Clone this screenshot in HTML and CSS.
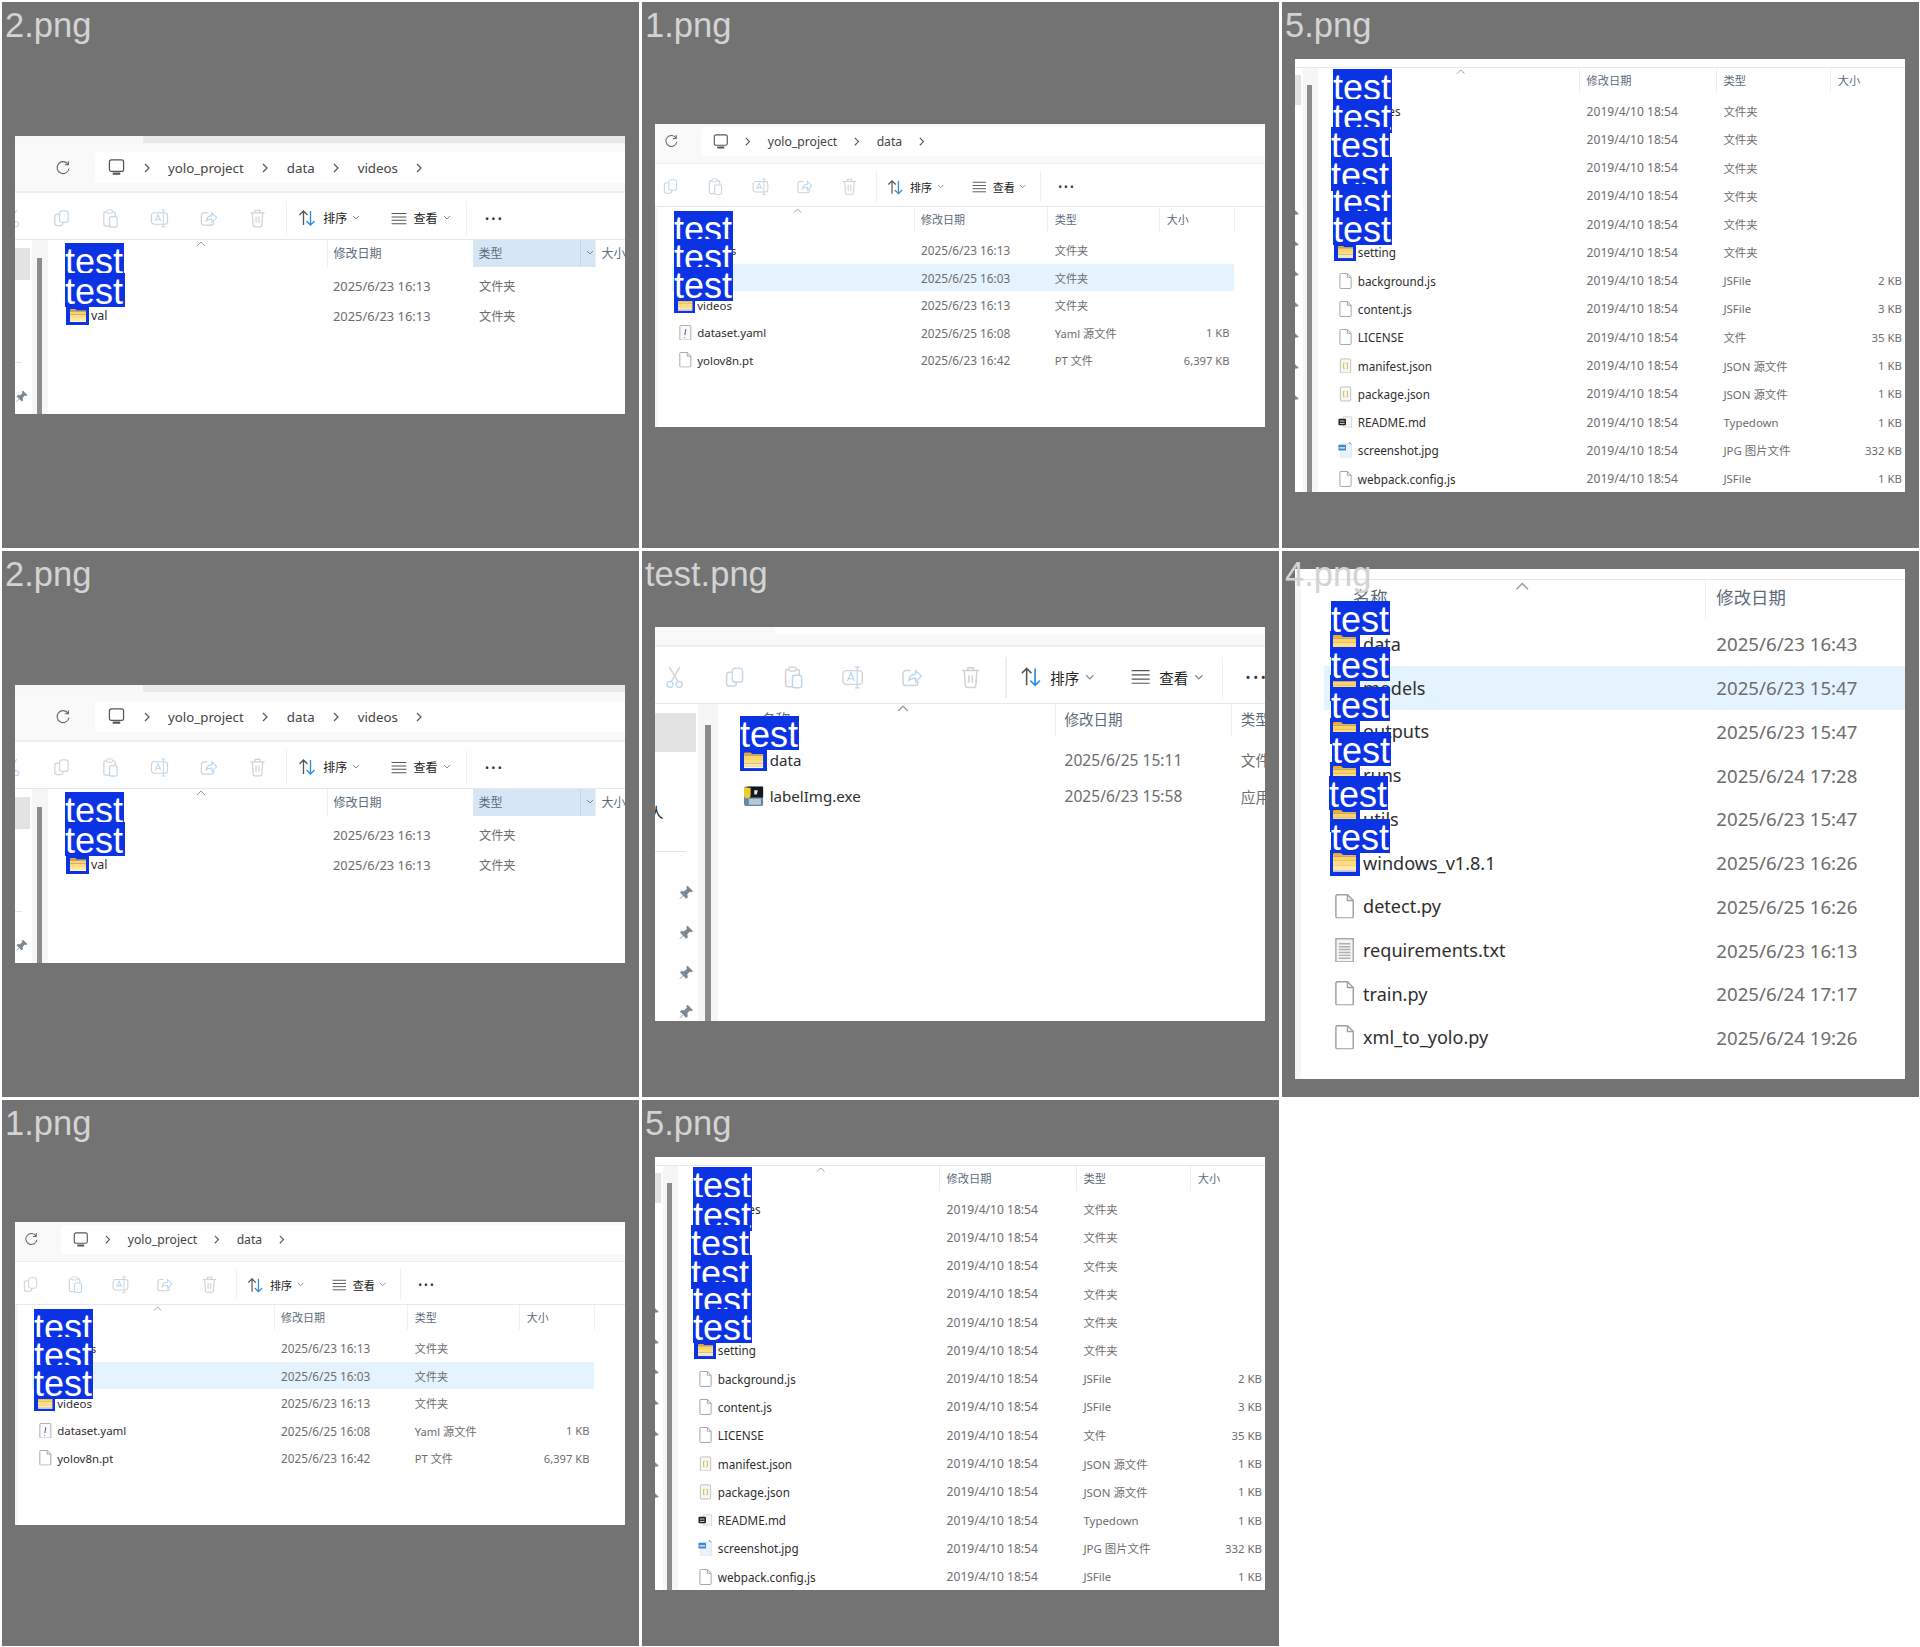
FILE: index.html
```html
<!DOCTYPE html>
<html lang="en">
<head>
    <meta charset="UTF-8">
    <title>Folder screenshots</title>
    <link rel="stylesheet" href="styles.css">
</head>
<body>
    <svg class="defs" width="0" height="0">
        <symbol id="refresh" viewBox="0 0 16 16"><path d="M13 4.2A6 6 0 1 0 14 8.5M13.4 1.2v3.6H9.8" fill="none" stroke="#666" stroke-width="1.1"/></symbol>
        <symbol id="pc" viewBox="0 0 18 18"><rect x="1.5" y="1" width="15" height="12" rx="2" fill="none" stroke="#555" stroke-width="1.3"/><path d="M5 15.5h8" stroke="#555" stroke-width="2.4"/></symbol>
        <symbol id="chev" viewBox="0 0 8 10"><path d="M2 1l4 4-4 4" fill="none" stroke="#555" stroke-width="1.2"/></symbol>
        <symbol id="cut" viewBox="0 0 18 20"><circle cx="5" cy="16" r="2.6" fill="none" stroke="#bcd8f0" stroke-width="1.2"/><circle cx="13" cy="16" r="2.6" fill="none" stroke="#bcd8f0" stroke-width="1.2"/><path d="M6 13.6L13.5 1M12 13.6L4.5 1" fill="none" stroke="#d2d2d2" stroke-width="1.2"/></symbol>
        <symbol id="copy" viewBox="0 0 18 20"><rect x="7" y="2" width="9" height="12" rx="2.5" fill="none" stroke="#c4dbef" stroke-width="1.3"/><path d="M7 5.5H4.5A2.5 2.5 0 0 0 2 8v7a2.500 2.500 0 0 0 2.500 2.500H8A2.500 2.500 0 0 0 10.500 15v-1" fill="none" stroke="#d2d2d2" stroke-width="1.3"/></symbol>
        <symbol id="paste" viewBox="0 0 18 20"><rect x="2" y="3" width="12" height="15" rx="2" fill="none" stroke="#d2d2d2" stroke-width="1.3"/><rect x="5" y="1" width="6" height="3.500" rx="1" fill="#fff" stroke="#d2d2d2"/><rect x="8" y="8" width="8" height="11" rx="2" fill="#fff" stroke="#bcd8f0" stroke-width="1.3"/></symbol>
        <symbol id="rename" viewBox="0 0 20 20"><rect x="1.500" y="4" width="17" height="12" rx="3" fill="none" stroke="#d2d2d2" stroke-width="1.2"/><path d="M5.500 13l3-7 3 7M6.500 11h4" fill="none" stroke="#bcd8f0" stroke-width="1.2"/><path d="M14 1v18M12 1h4M12 19h4" stroke="#bcd8f0" stroke-width="1.100"/></symbol>
        <symbol id="share" viewBox="0 0 18 20"><path d="M8 4H4a2.500 2.500 0 0 0-2.500 2.500v8A2.500 2.500 0 0 0 4 17h8a2.500 2.500 0 0 0 2.500-2.500V13" fill="none" stroke="#d2d2d2" stroke-width="1.300"/><path d="M6.500 12.500C7 9 9.500 7.200 12.500 7.200V4l5 5-5 5v-3.300c-2.500 0-4.500.4-6 1.800z" fill="#fff" stroke="#bcd8f0" stroke-width="1.200"/></symbol>
        <symbol id="trash" viewBox="0 0 18 20"><path d="M1.500 4h15M6.500 3.500V1.500h5v2M3.500 4l1 13.500a1.500 1.500 0 0 0 1.500 1.200h6a1.500 1.500 0 0 0 1.500-1.200l1-13.500M7.500 8v6.500M10.500 8v6.500" fill="none" stroke="#d2d2d2" stroke-width="1.300"/></symbol>
        <symbol id="sort" viewBox="0 0 18 18"><path d="M5.500 16V2M1.500 6l4-4 4 4" fill="none" stroke="#555" stroke-width="1.300"/><path d="M12.500 2v14M8.500 12l4 4 4-4" fill="none" stroke="#2f8fd8" stroke-width="1.400"/></symbol>
        <symbol id="view" viewBox="0 0 16 14"><path d="M0 1.500h16M0 5.300h16M0 9h16M0 12.700h16" stroke="#555" stroke-width="1.100"/></symbol>
        <symbol id="caret" viewBox="0 0 8 6"><path d="M1 1l3 3 3-3" fill="none" stroke="#888" stroke-width="1"/></symbol>
        <symbol id="up" viewBox="0 0 10 6"><path d="M1 5l4-4 4 4" fill="none" stroke="#9a9a9a" stroke-width="1"/></symbol>
        <symbol id="pin" viewBox="0 0 14 14"><path d="M8.500 1l4.500 4.500-1.300.6-1.700-.3L8 8.500l.3 2.500-1 1L2 6.700l1-1 2.500.3 2.700-2.500-.3-1.700zM4.300 9.700L1.500 12.500" fill="#7d8792" stroke="#7d8792" stroke-width=".7"/></symbol>
        <symbol id="folder" viewBox="0 0 16 13"><path d="M0 1a1 1 0 0 1 1-1h4.500l1.500 1.500H0z" fill="#eeaa22"/><rect y="1.500" width="16" height="1" fill="#f5c24a"/><rect y="2.500" width="16" height="3" fill="#ffd35f"/><rect y="5.500" width="16" height="3.500" fill="#ffdd80"/><rect y="9" width="16" height="3" fill="#fee8a8"/><rect y="12" width="16" height="1" fill="#fff8e2"/></symbol>
        <symbol id="file" viewBox="0 0 13 17"><path d="M.5 1.500a1 1 0 0 1 1-1H8.500l4 4v11a1 1 0 0 1-1 1h-10a1 1 0 0 1-1-1z" fill="#fff" stroke="#a0a0a0"/><path d="M8.500.5v4h4" fill="none" stroke="#a0a0a0"/></symbol>
        <symbol id="yaml" viewBox="0 0 13 17"><rect x=".5" y=".5" width="12" height="16" rx="1" fill="#fafafa" stroke="#a8a8a8"/><path d="M7 4.500L6 11M5.600 13.200v.8" stroke="#5a6f9c" stroke-width="1.200"/></symbol>
        <symbol id="json" viewBox="0 0 13 17"><rect x="1" y="1" width="11" height="15" rx="1" fill="#f8f8f0" stroke="#bdbdbd"/><path d="M5.500 5.500H4.500v6h1M7.500 5.500h1v6h-1" fill="none" stroke="#c2bb55"/></symbol>
        <symbol id="md" viewBox="0 0 13 17"><path d="M4 3h9v11H4z" fill="#f6f6f6" stroke="#d8d8d8"/><rect x="-1" y="5" width="8" height="7" rx="1" fill="#222"/><rect x=".5" y="7" width="5" height="1" fill="#ddd"/><rect x=".5" y="9.500" width="5" height="1" fill="#ddd"/></symbol>
        <symbol id="jpg" viewBox="0 0 13 17"><rect x="1" y="2" width="12" height="15" fill="#eaf2fa" stroke="#e2e9f0"/><rect x="-1" y="3" width="8" height="6" fill="#3f86d2"/><rect x="0" y="5.500" width="6" height="1.500" fill="#dce9f6"/><path d="M10 0l2.500 2.500" stroke="#3f86d2"/></symbol>
        <symbol id="txt" viewBox="0 0 13 17"><rect x=".5" y=".5" width="12" height="16" fill="#f4f4f4" stroke="#a8a8a8"/><path d="M2.500 4h8M2.500 6h8M2.500 8h8M2.500 10h8M2.500 12h8M2.500 14h8" stroke="#b0b0b0"/></symbol>
        <symbol id="exe" viewBox="0 0 16 16"><rect width="16" height="16" rx="1.500" fill="#5f89ad"/><rect x="3" width="13" height="9" fill="#17181c"/><path d="M0 1h5.500v6A2.700 2.700 0 0 1 0 7z" fill="#f2c92f"/><path d="M8.500 3h3l-1 3.500H8.500z" fill="#e8e8e8"/><rect x="4" y="10" width="10" height="5" fill="#b9c6d2"/></symbol>
    </svg>

    <div class="sheet">

        <div class="tile shot-videos">
            <div class="panel">
                <div class="win">
                    <div class="tabs"></div>
                    <div class="addr">
                        <svg class="refresh"><use href="#refresh"/></svg>
                        <div class="crumbs">
                            <svg class="pc"><use href="#pc"/></svg>
                            <svg class="chev"><use href="#chev"/></svg><span>yolo_project</span>
                            <svg class="chev"><use href="#chev"/></svg><span>data</span>
                            <svg class="chev"><use href="#chev"/></svg><span>videos</span>
                            <svg class="chev"><use href="#chev"/></svg>
                        </div>
                    </div>
                    <div class="tools">
                        <svg class="tool"><use href="#cut"/></svg>
                        <svg class="tool"><use href="#copy"/></svg>
                        <svg class="tool"><use href="#paste"/></svg>
                        <svg class="tool"><use href="#rename"/></svg>
                        <svg class="tool"><use href="#share"/></svg>
                        <svg class="tool"><use href="#trash"/></svg>
                        <i class="tool-sep"></i>
                        <svg class="sort"><use href="#sort"/></svg><span class="tool-text">排序</span><svg class="caret"><use href="#caret"/></svg>
                        <svg class="view"><use href="#view"/></svg><span class="tool-text">查看</span><svg class="caret"><use href="#caret"/></svg>
                        <i class="tool-sep sep-b"></i>
                        <span class="dots">•••</span>
                    </div>
                    <div class="body">
                        <div class="side">
                            <div class="side-sel"></div>
                            <div class="side-who">人</div>
                            <div class="side-line"></div>
                            <svg class="pin"><use href="#pin"/></svg>
                            <svg class="pin"><use href="#pin"/></svg>
                        </div>
                        <div class="list">
                            <div class="head">
                                <div class="hd hd-name"><svg class="up"><use href="#up"/></svg>名称</div>
                                <div class="hd">修改日期</div>
                                <div class="hd hd-on">类型<svg class="caret"><use href="#caret"/></svg></div>
                                <div class="hd">大小</div>
                            </div>
                            <div class="row"><div class="name dir"><svg class="ico"><use href="#folder"/></svg><span>train</span></div><span class="date">2025/6/23 16:13</span><span>文件夹</span><span class="size"></span></div>
                            <div class="row"><div class="name dir"><svg class="ico"><use href="#folder"/></svg><span>val</span></div><span class="date">2025/6/23 16:13</span><span>文件夹</span><span class="size"></span></div>
                        </div>
                    </div>
                </div>
                <div class="masks"><span class="mask">test</span><span class="mask">test</span></div>
            </div>
            <span class="tile-name">2.png</span>
        </div>

        <div class="tile shot-data">
            <div class="panel">
                <div class="win">
                    <div class="tabs"></div>
                    <div class="addr">
                        <svg class="refresh"><use href="#refresh"/></svg>
                        <div class="crumbs">
                            <svg class="pc"><use href="#pc"/></svg>
                            <svg class="chev"><use href="#chev"/></svg><span>yolo_project</span>
                            <svg class="chev"><use href="#chev"/></svg><span>data</span>
                            <svg class="chev"><use href="#chev"/></svg>
                        </div>
                    </div>
                    <div class="tools">
                        <svg class="tool"><use href="#cut"/></svg>
                        <svg class="tool"><use href="#copy"/></svg>
                        <svg class="tool"><use href="#paste"/></svg>
                        <svg class="tool"><use href="#rename"/></svg>
                        <svg class="tool"><use href="#share"/></svg>
                        <svg class="tool"><use href="#trash"/></svg>
                        <i class="tool-sep"></i>
                        <svg class="sort"><use href="#sort"/></svg><span class="tool-text">排序</span><svg class="caret"><use href="#caret"/></svg>
                        <svg class="view"><use href="#view"/></svg><span class="tool-text">查看</span><svg class="caret"><use href="#caret"/></svg>
                        <i class="tool-sep sep-b"></i>
                        <span class="dots">•••</span>
                    </div>
                    <div class="body">
                        <div class="side"></div>
                        <div class="list">
                            <div class="head">
                                <div class="hd hd-name"><svg class="up"><use href="#up"/></svg>名称</div>
                                <div class="hd">修改日期</div>
                                <div class="hd">类型</div>
                                <div class="hd">大小</div>
                            </div>
                            <div class="row"><div class="name dir"><svg class="ico"><use href="#folder"/></svg><span>images</span></div><span class="date">2025/6/23 16:13</span><span>文件夹</span><span class="size"></span></div>
                            <div class="row hot"><div class="name dir"><svg class="ico"><use href="#folder"/></svg><span>labels</span></div><span class="date">2025/6/25 16:03</span><span>文件夹</span><span class="size"></span></div>
                            <div class="row"><div class="name dir"><svg class="ico"><use href="#folder"/></svg><span>videos</span></div><span class="date">2025/6/23 16:13</span><span>文件夹</span><span class="size"></span></div>
                            <div class="row"><div class="name"><svg class="ico"><use href="#yaml"/></svg><span>dataset.yaml</span></div><span class="date">2025/6/25 16:08</span><span>Yaml 源文件</span><span class="size">1 KB</span></div>
                            <div class="row"><div class="name"><svg class="ico"><use href="#file"/></svg><span>yolov8n.pt</span></div><span class="date">2025/6/23 16:42</span><span>PT 文件</span><span class="size">6,397 KB</span></div>
                        </div>
                    </div>
                </div>
                <div class="masks"><span class="mask">test</span><span class="mask">test</span><span class="mask">test</span></div>
            </div>
            <span class="tile-name">1.png</span>
        </div>

        <div class="tile shot-ext">
            <div class="panel">
                <div class="win">
                    <div class="body">
                        <div class="side">
                            <div class="side-sel"></div>
                            <div class="side-who"></div>
                            <div class="side-line"></div>
                            <svg class="pin"><use href="#pin"/></svg>
                            <svg class="pin"><use href="#pin"/></svg>
                            <svg class="pin"><use href="#pin"/></svg>
                            <svg class="pin"><use href="#pin"/></svg>
                            <svg class="pin"><use href="#pin"/></svg>
                            <svg class="pin"><use href="#pin"/></svg>
                            <svg class="pin"><use href="#pin"/></svg>
                        </div>
                        <div class="list">
                            <div class="head">
                                <div class="hd hd-name"><svg class="up"><use href="#up"/></svg>名称</div>
                                <div class="hd">修改日期</div>
                                <div class="hd">类型</div>
                                <div class="hd">大小</div>
                            </div>
                            <div class="row"><div class="name dir"><svg class="ico"><use href="#folder"/></svg><span>_locales</span></div><span class="date">2019/4/10 18:54</span><span>文件夹</span><span class="size"></span></div>
                            <div class="row"><div class="name dir"><svg class="ico"><use href="#folder"/></svg><span></span></div><span class="date">2019/4/10 18:54</span><span>文件夹</span><span class="size"></span></div>
                            <div class="row"><div class="name dir"><svg class="ico"><use href="#folder"/></svg><span></span></div><span class="date">2019/4/10 18:54</span><span>文件夹</span><span class="size"></span></div>
                            <div class="row"><div class="name dir"><svg class="ico"><use href="#folder"/></svg><span></span></div><span class="date">2019/4/10 18:54</span><span>文件夹</span><span class="size"></span></div>
                            <div class="row"><div class="name dir"><svg class="ico"><use href="#folder"/></svg><span>emoji</span></div><span class="date">2019/4/10 18:54</span><span>文件夹</span><span class="size"></span></div>
                            <div class="row"><div class="name dir"><svg class="ico"><use href="#folder"/></svg><span>setting</span></div><span class="date">2019/4/10 18:54</span><span>文件夹</span><span class="size"></span></div>
                            <div class="row"><div class="name"><svg class="ico"><use href="#file"/></svg><span>background.js</span></div><span class="date">2019/4/10 18:54</span><span>JSFile</span><span class="size">2 KB</span></div>
                            <div class="row"><div class="name"><svg class="ico"><use href="#file"/></svg><span>content.js</span></div><span class="date">2019/4/10 18:54</span><span>JSFile</span><span class="size">3 KB</span></div>
                            <div class="row"><div class="name"><svg class="ico"><use href="#file"/></svg><span>LICENSE</span></div><span class="date">2019/4/10 18:54</span><span>文件</span><span class="size">35 KB</span></div>
                            <div class="row"><div class="name"><svg class="ico"><use href="#json"/></svg><span>manifest.json</span></div><span class="date">2019/4/10 18:54</span><span>JSON 源文件</span><span class="size">1 KB</span></div>
                            <div class="row"><div class="name"><svg class="ico"><use href="#json"/></svg><span>package.json</span></div><span class="date">2019/4/10 18:54</span><span>JSON 源文件</span><span class="size">1 KB</span></div>
                            <div class="row"><div class="name"><svg class="ico"><use href="#md"/></svg><span>README.md</span></div><span class="date">2019/4/10 18:54</span><span>Typedown</span><span class="size">1 KB</span></div>
                            <div class="row"><div class="name"><svg class="ico"><use href="#jpg"/></svg><span>screenshot.jpg</span></div><span class="date">2019/4/10 18:54</span><span>JPG 图片文件</span><span class="size">332 KB</span></div>
                            <div class="row"><div class="name"><svg class="ico"><use href="#file"/></svg><span>webpack.config.js</span></div><span class="date">2019/4/10 18:54</span><span>JSFile</span><span class="size">1 KB</span></div>
                        </div>
                    </div>
                </div>
                <div class="masks"><span class="mask">test</span><span class="mask">test</span><span class="mask">test</span><span class="mask">test</span><span class="mask">test</span><span class="mask">test</span></div>
            </div>
            <span class="tile-name">5.png</span>
        </div>

        <div class="tile shot-videos">
            <div class="panel">
                <div class="win">
                    <div class="tabs"></div>
                    <div class="addr">
                        <svg class="refresh"><use href="#refresh"/></svg>
                        <div class="crumbs">
                            <svg class="pc"><use href="#pc"/></svg>
                            <svg class="chev"><use href="#chev"/></svg><span>yolo_project</span>
                            <svg class="chev"><use href="#chev"/></svg><span>data</span>
                            <svg class="chev"><use href="#chev"/></svg><span>videos</span>
                            <svg class="chev"><use href="#chev"/></svg>
                        </div>
                    </div>
                    <div class="tools">
                        <svg class="tool"><use href="#cut"/></svg>
                        <svg class="tool"><use href="#copy"/></svg>
                        <svg class="tool"><use href="#paste"/></svg>
                        <svg class="tool"><use href="#rename"/></svg>
                        <svg class="tool"><use href="#share"/></svg>
                        <svg class="tool"><use href="#trash"/></svg>
                        <i class="tool-sep"></i>
                        <svg class="sort"><use href="#sort"/></svg><span class="tool-text">排序</span><svg class="caret"><use href="#caret"/></svg>
                        <svg class="view"><use href="#view"/></svg><span class="tool-text">查看</span><svg class="caret"><use href="#caret"/></svg>
                        <i class="tool-sep sep-b"></i>
                        <span class="dots">•••</span>
                    </div>
                    <div class="body">
                        <div class="side">
                            <div class="side-sel"></div>
                            <div class="side-who">人</div>
                            <div class="side-line"></div>
                            <svg class="pin"><use href="#pin"/></svg>
                            <svg class="pin"><use href="#pin"/></svg>
                        </div>
                        <div class="list">
                            <div class="head">
                                <div class="hd hd-name"><svg class="up"><use href="#up"/></svg>名称</div>
                                <div class="hd">修改日期</div>
                                <div class="hd hd-on">类型<svg class="caret"><use href="#caret"/></svg></div>
                                <div class="hd">大小</div>
                            </div>
                            <div class="row"><div class="name dir"><svg class="ico"><use href="#folder"/></svg><span>train</span></div><span class="date">2025/6/23 16:13</span><span>文件夹</span><span class="size"></span></div>
                            <div class="row"><div class="name dir"><svg class="ico"><use href="#folder"/></svg><span>val</span></div><span class="date">2025/6/23 16:13</span><span>文件夹</span><span class="size"></span></div>
                        </div>
                    </div>
                </div>
                <div class="masks"><span class="mask">test</span><span class="mask">test</span></div>
            </div>
            <span class="tile-name">2.png</span>
        </div>

        <div class="tile shot-root">
            <div class="panel">
                <div class="win">
                    <div class="tabs"></div>
                    <div class="addr"><div class="crumbs"></div></div>
                    <div class="tools">
                        <svg class="tool"><use href="#cut"/></svg>
                        <svg class="tool"><use href="#copy"/></svg>
                        <svg class="tool"><use href="#paste"/></svg>
                        <svg class="tool"><use href="#rename"/></svg>
                        <svg class="tool"><use href="#share"/></svg>
                        <svg class="tool"><use href="#trash"/></svg>
                        <i class="tool-sep"></i>
                        <svg class="sort"><use href="#sort"/></svg><span class="tool-text">排序</span><svg class="caret"><use href="#caret"/></svg>
                        <svg class="view"><use href="#view"/></svg><span class="tool-text">查看</span><svg class="caret"><use href="#caret"/></svg>
                        <i class="tool-sep sep-b"></i>
                        <span class="dots">•••</span>
                    </div>
                    <div class="body">
                        <div class="side">
                            <div class="side-sel"></div>
                            <div class="side-who">人</div>
                            <div class="side-line"></div>
                            <svg class="pin"><use href="#pin"/></svg>
                            <svg class="pin"><use href="#pin"/></svg>
                            <svg class="pin"><use href="#pin"/></svg>
                            <svg class="pin"><use href="#pin"/></svg>
                        </div>
                        <div class="list">
                            <div class="head">
                                <div class="hd hd-name"><svg class="up"><use href="#up"/></svg>名称</div>
                                <div class="hd">修改日期</div>
                                <div class="hd">类型</div>
                            </div>
                            <div class="row"><div class="name dir"><svg class="ico"><use href="#folder"/></svg><span>data</span></div><span class="date">2025/6/25 15:11</span><span>文件夹</span></div>
                            <div class="row"><div class="name"><svg class="ico"><use href="#exe"/></svg><span>labelImg.exe</span></div><span class="date">2025/6/23 15:58</span><span>应用程序</span></div>
                        </div>
                    </div>
                </div>
                <div class="masks"><span class="mask">test</span></div>
            </div>
            <span class="tile-name">test.png</span>
        </div>

        <div class="tile shot-yolo">
            <div class="panel">
                <div class="win">
                    <div class="body">
                        <div class="side"></div>
                        <div class="list">
                            <div class="head">
                                <div class="hd hd-name"><svg class="up"><use href="#up"/></svg>名称</div>
                                <div class="hd">修改日期</div>
                            </div>
                            <div class="row"><div class="name dir"><svg class="ico"><use href="#folder"/></svg><span>data</span></div><span class="date">2025/6/23 16:43</span></div>
                            <div class="row hot"><div class="name dir"><svg class="ico"><use href="#folder"/></svg><span>models</span></div><span class="date">2025/6/23 15:47</span></div>
                            <div class="row"><div class="name dir"><svg class="ico"><use href="#folder"/></svg><span>outputs</span></div><span class="date">2025/6/23 15:47</span></div>
                            <div class="row"><div class="name dir"><svg class="ico"><use href="#folder"/></svg><span>runs</span></div><span class="date">2025/6/24 17:28</span></div>
                            <div class="row"><div class="name dir"><svg class="ico"><use href="#folder"/></svg><span>utils</span></div><span class="date">2025/6/23 15:47</span></div>
                            <div class="row"><div class="name dir"><svg class="ico"><use href="#folder"/></svg><span>windows_v1.8.1</span></div><span class="date">2025/6/23 16:26</span></div>
                            <div class="row"><div class="name"><svg class="ico"><use href="#file"/></svg><span>detect.py</span></div><span class="date">2025/6/25 16:26</span></div>
                            <div class="row"><div class="name"><svg class="ico"><use href="#txt"/></svg><span>requirements.txt</span></div><span class="date">2025/6/23 16:13</span></div>
                            <div class="row"><div class="name"><svg class="ico"><use href="#file"/></svg><span>train.py</span></div><span class="date">2025/6/24 17:17</span></div>
                            <div class="row"><div class="name"><svg class="ico"><use href="#file"/></svg><span>xml_to_yolo.py</span></div><span class="date">2025/6/24 19:26</span></div>
                        </div>
                    </div>
                </div>
                <div class="masks"><span class="mask">test</span><span class="mask">test</span><span class="mask">test</span><span class="mask">test</span><span class="mask">test</span><span class="mask">test</span></div>
            </div>
            <span class="tile-name">4.png</span>
        </div>

        <div class="tile shot-data">
            <div class="panel">
                <div class="win">
                    <div class="tabs"></div>
                    <div class="addr">
                        <svg class="refresh"><use href="#refresh"/></svg>
                        <div class="crumbs">
                            <svg class="pc"><use href="#pc"/></svg>
                            <svg class="chev"><use href="#chev"/></svg><span>yolo_project</span>
                            <svg class="chev"><use href="#chev"/></svg><span>data</span>
                            <svg class="chev"><use href="#chev"/></svg>
                        </div>
                    </div>
                    <div class="tools">
                        <svg class="tool"><use href="#cut"/></svg>
                        <svg class="tool"><use href="#copy"/></svg>
                        <svg class="tool"><use href="#paste"/></svg>
                        <svg class="tool"><use href="#rename"/></svg>
                        <svg class="tool"><use href="#share"/></svg>
                        <svg class="tool"><use href="#trash"/></svg>
                        <i class="tool-sep"></i>
                        <svg class="sort"><use href="#sort"/></svg><span class="tool-text">排序</span><svg class="caret"><use href="#caret"/></svg>
                        <svg class="view"><use href="#view"/></svg><span class="tool-text">查看</span><svg class="caret"><use href="#caret"/></svg>
                        <i class="tool-sep sep-b"></i>
                        <span class="dots">•••</span>
                    </div>
                    <div class="body">
                        <div class="side"></div>
                        <div class="list">
                            <div class="head">
                                <div class="hd hd-name"><svg class="up"><use href="#up"/></svg>名称</div>
                                <div class="hd">修改日期</div>
                                <div class="hd">类型</div>
                                <div class="hd">大小</div>
                            </div>
                            <div class="row"><div class="name dir"><svg class="ico"><use href="#folder"/></svg><span>images</span></div><span class="date">2025/6/23 16:13</span><span>文件夹</span><span class="size"></span></div>
                            <div class="row hot"><div class="name dir"><svg class="ico"><use href="#folder"/></svg><span>labels</span></div><span class="date">2025/6/25 16:03</span><span>文件夹</span><span class="size"></span></div>
                            <div class="row"><div class="name dir"><svg class="ico"><use href="#folder"/></svg><span>videos</span></div><span class="date">2025/6/23 16:13</span><span>文件夹</span><span class="size"></span></div>
                            <div class="row"><div class="name"><svg class="ico"><use href="#yaml"/></svg><span>dataset.yaml</span></div><span class="date">2025/6/25 16:08</span><span>Yaml 源文件</span><span class="size">1 KB</span></div>
                            <div class="row"><div class="name"><svg class="ico"><use href="#file"/></svg><span>yolov8n.pt</span></div><span class="date">2025/6/23 16:42</span><span>PT 文件</span><span class="size">6,397 KB</span></div>
                        </div>
                    </div>
                </div>
                <div class="masks"><span class="mask">test</span><span class="mask">test</span><span class="mask">test</span></div>
            </div>
            <span class="tile-name">1.png</span>
        </div>

        <div class="tile shot-ext">
            <div class="panel">
                <div class="win">
                    <div class="body">
                        <div class="side">
                            <div class="side-sel"></div>
                            <div class="side-who"></div>
                            <div class="side-line"></div>
                            <svg class="pin"><use href="#pin"/></svg>
                            <svg class="pin"><use href="#pin"/></svg>
                            <svg class="pin"><use href="#pin"/></svg>
                            <svg class="pin"><use href="#pin"/></svg>
                            <svg class="pin"><use href="#pin"/></svg>
                            <svg class="pin"><use href="#pin"/></svg>
                            <svg class="pin"><use href="#pin"/></svg>
                        </div>
                        <div class="list">
                            <div class="head">
                                <div class="hd hd-name"><svg class="up"><use href="#up"/></svg>名称</div>
                                <div class="hd">修改日期</div>
                                <div class="hd">类型</div>
                                <div class="hd">大小</div>
                            </div>
                            <div class="row"><div class="name dir"><svg class="ico"><use href="#folder"/></svg><span>_locales</span></div><span class="date">2019/4/10 18:54</span><span>文件夹</span><span class="size"></span></div>
                            <div class="row"><div class="name dir"><svg class="ico"><use href="#folder"/></svg><span></span></div><span class="date">2019/4/10 18:54</span><span>文件夹</span><span class="size"></span></div>
                            <div class="row"><div class="name dir"><svg class="ico"><use href="#folder"/></svg><span></span></div><span class="date">2019/4/10 18:54</span><span>文件夹</span><span class="size"></span></div>
                            <div class="row"><div class="name dir"><svg class="ico"><use href="#folder"/></svg><span></span></div><span class="date">2019/4/10 18:54</span><span>文件夹</span><span class="size"></span></div>
                            <div class="row"><div class="name dir"><svg class="ico"><use href="#folder"/></svg><span>emoji</span></div><span class="date">2019/4/10 18:54</span><span>文件夹</span><span class="size"></span></div>
                            <div class="row"><div class="name dir"><svg class="ico"><use href="#folder"/></svg><span>setting</span></div><span class="date">2019/4/10 18:54</span><span>文件夹</span><span class="size"></span></div>
                            <div class="row"><div class="name"><svg class="ico"><use href="#file"/></svg><span>background.js</span></div><span class="date">2019/4/10 18:54</span><span>JSFile</span><span class="size">2 KB</span></div>
                            <div class="row"><div class="name"><svg class="ico"><use href="#file"/></svg><span>content.js</span></div><span class="date">2019/4/10 18:54</span><span>JSFile</span><span class="size">3 KB</span></div>
                            <div class="row"><div class="name"><svg class="ico"><use href="#file"/></svg><span>LICENSE</span></div><span class="date">2019/4/10 18:54</span><span>文件</span><span class="size">35 KB</span></div>
                            <div class="row"><div class="name"><svg class="ico"><use href="#json"/></svg><span>manifest.json</span></div><span class="date">2019/4/10 18:54</span><span>JSON 源文件</span><span class="size">1 KB</span></div>
                            <div class="row"><div class="name"><svg class="ico"><use href="#json"/></svg><span>package.json</span></div><span class="date">2019/4/10 18:54</span><span>JSON 源文件</span><span class="size">1 KB</span></div>
                            <div class="row"><div class="name"><svg class="ico"><use href="#md"/></svg><span>README.md</span></div><span class="date">2019/4/10 18:54</span><span>Typedown</span><span class="size">1 KB</span></div>
                            <div class="row"><div class="name"><svg class="ico"><use href="#jpg"/></svg><span>screenshot.jpg</span></div><span class="date">2019/4/10 18:54</span><span>JPG 图片文件</span><span class="size">332 KB</span></div>
                            <div class="row"><div class="name"><svg class="ico"><use href="#file"/></svg><span>webpack.config.js</span></div><span class="date">2019/4/10 18:54</span><span>JSFile</span><span class="size">1 KB</span></div>
                        </div>
                    </div>
                </div>
                <div class="masks"><span class="mask">test</span><span class="mask">test</span><span class="mask">test</span><span class="mask">test</span><span class="mask">test</span><span class="mask">test</span></div>
            </div>
            <span class="tile-name">5.png</span>
        </div>

    </div>
</body>
</html>
```

FILE: styles.css
```css
body {
    margin: 0;
    background-color: #ffffff;
    font-family: "Noto Sans", "Noto Sans CJK SC", sans-serif;
}
.defs {
    position: absolute;
}
.sheet {
    display: grid;
    grid-template-columns: repeat(3, 637px);
    grid-auto-rows: 546px;
    gap: 3px;
    padding: 2px 0 0 2px;
}

/* one grey tile with the file name on top */
.tile {
    position: relative;
    display: flex;
    align-items: center;
    justify-content: center;
    background-color: #737373;
}
.tile-name {
    position: absolute;
    left: 3px;
    top: 1px;
    font-family: "Liberation Sans", sans-serif;
    font-size: 34.5px;
    line-height: 44px;
    color: #d3d3d3;
}
.panel {
    position: relative;
    width: 610px;
    margin-right: 1px;
    overflow: hidden;
    background-color: #ffffff;
}

/* each screenshot is the same explorer window, scaled and cropped */
.win {
    width: 900px;
}
.shot-videos .panel { height: 278px; }
.shot-videos .win { margin-left: -19px; }
.shot-videos .head { height: 30.5px; }
.shot-videos .hd { padding-left: 5.5px; }
.shot-videos .hd-name { padding-left: 20px; }
.shot-videos .row > span { padding-left: 5px; }
.shot-data .panel { height: 303px; }
.shot-data .win { zoom: 0.917; margin: -12px 0 0 -49px; }
.shot-data .head { height: 32px; }
.shot-ext .panel { height: 433px; }
.shot-ext .win { zoom: 0.9375; margin: 9px 0 0 -28px; }
.shot-ext .head { height: 31px; }
.shot-ext .row { height: 30.15px; }
.shot-root .panel { height: 394px; }
.shot-root .win { zoom: 1.208; margin-top: -40px; }
.shot-root .head { height: 31.5px; }
.shot-yolo .panel { height: 510px; }
.shot-yolo .win { zoom: 1.448; margin: 7px 0 0 -48px; }
.shot-yolo .head { height: 29px; }
.shot-yolo .hd { padding-bottom: 4px; }
.shot-yolo .row { height: 30.2px; }
.shot-yolo .name.dir::before { left: 4px; width: 21px; }

/* title strip and address bar */
.tabs {
    height: 7px;
    background: linear-gradient(to right, #f8f8f8 147px, #e9e9e9 147px);
}
.addr {
    display: flex;
    align-items: flex-start;
    height: 48px;
    border-bottom: 2px solid #eeeeee;
    background-color: #f9f9f9;
}
.refresh {
    width: 16px;
    height: 16px;
    margin: 17px 0 0 59px;
}
.addr .crumbs {
    display: flex;
    align-items: center;
    gap: 17.5px;
    width: 700px;
    height: 31px;
    margin: 9px 0 0 24px;
    padding-left: 13px;
    border-radius: 4px;
    background-color: #ffffff;
    font-size: 13.3px;
    color: #444444;
}
.addr .crumbs:first-child {
    margin-left: 99px;
}
.pc {
    width: 17px;
    height: 17px;
}
.chev {
    width: 8px;
    height: 10px;
}

/* command bar */
.tools {
    display: flex;
    align-items: center;
    height: 42px;
    padding-top: 4px;
    border-bottom: 1px solid #e8e8e8;
    background-color: #ffffff;
    margin-left: -8px;
}
.tool {
    width: 49px;
    height: 19px;
}
.tool-sep {
    width: 1px;
    height: 34px;
    margin: 0 11.3px 0 4px;
    background-color: #f0f0f0;
}
.sep-b {
    margin: 0 18.5px 0 15px;
}
.sort {
    width: 18px;
    height: 18px;
}
.view {
    width: 16px;
    height: 13px;
    margin-left: 30.2px;
}
.tool-text {
    margin-left: 7px;
    font-size: 12px;
    color: #222222;
}
.caret {
    width: 8px;
    height: 6px;
    margin-left: 5px;
}
.dots {
    font-size: 11px;
    letter-spacing: 2.2px;
    color: #333333;
}

/* nav pane stub and file list */
.body {
    display: flex;
    border-top: 1px solid #e8e8e8;
}
.tools + .body {
    border-top: 0;
}
.side {
    position: relative;
    flex: none;
    display: flex;
    flex-direction: column;
    align-items: flex-start;
    width: 52px;
    height: 900px;
    background: linear-gradient(to right, #ffffff 36px, #f6f6f6 36px);
}
.side::after {
    content: "";
    position: absolute;
    left: 41px;
    top: 18px;
    bottom: 0;
    width: 5px;
    background-color: #8c8c8c;
}
.side-sel {
    width: 34px;
    height: 32px;
    margin-top: 8px;
    background-color: #e3e3e3;
}
.side-who {
    height: 17px;
    margin: 42px 0 0 -5px;
    font-size: 12px;
    line-height: 17px;
    color: #222222;
}
.side-line {
    width: 26px;
    height: 1px;
    margin-top: 23px;
    background-color: #e4e4e4;
}
.pin {
    width: 13px;
    height: 13px;
    margin: 20px 0 0 19px;
}
.side-line + .pin {
    margin-top: 27px;
}
.list {
    flex: none;
    margin-left: 16px;
    width: 612px;
}
.head {
    position: relative;
    display: grid;
    grid-template-columns: 264px 146px 122px 82px;
    font-size: 12px;
    color: #5c6b7c;
}
.hd {
    display: flex;
    align-items: center;
    box-sizing: border-box;
    height: 27px;
    padding: 0 0 2px 7px;
    border-right: 1px solid #efefef;
}
.hd-name {
    padding-left: 20px;
}
.hd-on {
    background: linear-gradient(to right, #d6e6f5 107px, #c6d6e4 107px, #c6d6e4 108px, #d6e6f5 108px);
    margin-left: -1px;
}
.hd-on .caret {
    margin-left: 83px;
}
.up {
    position: absolute;
    left: 132px;
    top: 1px;
    width: 10px;
    height: 6px;
}
.row {
    display: grid;
    grid-template-columns: 264px 146px 122px 80px;
    align-items: center;
    height: 30px;
    font-size: 12.2px;
    color: #6d6d6d;
}
.row > span {
    padding-left: 7px;
    white-space: nowrap;
}
.row > .date {
    font-size: 12.9px;
}
.row.hot {
    background-color: #e5f3ff;
}
.name {
    position: relative;
    display: flex;
    align-items: center;
    height: 30px;
    padding-left: 6px;
    font-size: 12.5px;
    color: #2e2e2e;
}
.name.dir::before {
    content: "";
    position: absolute;
    left: 2px;
    top: 6px;
    width: 23px;
    height: 18px;
    background-color: #0b33e3;
}
.ico {
    position: relative;
    flex: none;
    width: 16px;
    height: 17px;
    margin-right: 5px;
}
.row > .size {
    padding: 0 4.5px 0 0;
    text-align: right;
}

/* blue labels pasted over the folder names, same size in every tile */
.masks .mask {
    position: absolute;
    width: 59px;
    height: 34px;
    overflow: hidden;
    background-color: #0b33e3;
    font-family: "Liberation Sans", sans-serif;
    font-size: 36px;
    line-height: 37px;
    color: #ffffff;
}
.shot-videos .mask:nth-child(1) { left: 50px; top: 107px; }
.shot-videos .mask:nth-child(2) { left: 50px; top: 137px; width: 60px; }
.shot-data .mask:nth-child(1) { left: 19px; top: 87px; }
.shot-data .mask:nth-child(2) { left: 19px; top: 115px; }
.shot-data .mask:nth-child(3) { left: 19px; top: 143px; }
.shot-ext .mask:nth-child(1) { left: 38px; top: 10px; }
.shot-ext .mask:nth-child(2) { left: 38px; top: 40px; }
.shot-ext .mask:nth-child(3) { left: 36px; top: 68px; }
.shot-ext .mask:nth-child(4) { left: 36px; top: 98px; width: 61px; }
.shot-ext .mask:nth-child(5) { left: 38px; top: 125px; }
.shot-ext .mask:nth-child(6) { left: 38px; top: 152px; }
.shot-root .mask { left: 85px; top: 89px; }
.shot-yolo .mask:nth-child(1) { left: 36px; top: 32px; }
.shot-yolo .mask:nth-child(2) { left: 36px; top: 78px; }
.shot-yolo .mask:nth-child(3) { left: 36px; top: 118px; }
.shot-yolo .mask:nth-child(4) { left: 37px; top: 163px; }
.shot-yolo .mask:nth-child(5) { left: 34px; top: 207px; }
.shot-yolo .mask:nth-child(6) { left: 36px; top: 250px; }
```
